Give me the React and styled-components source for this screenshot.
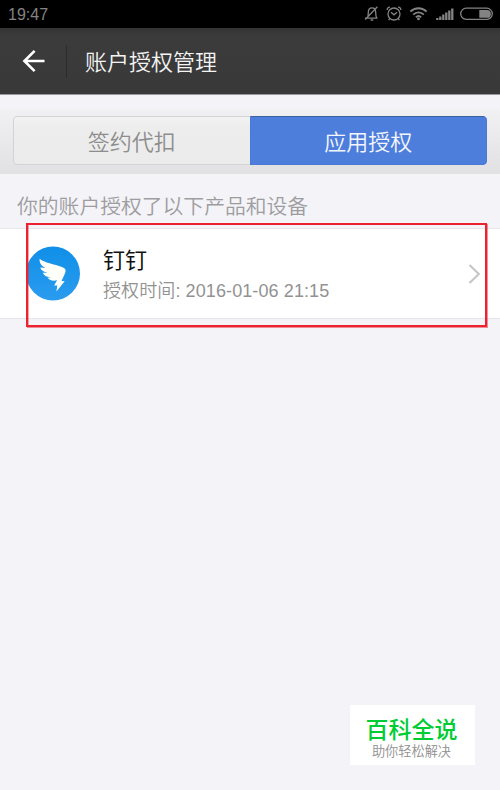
import React, { useState } from 'react';
import styled, { createGlobalStyle } from 'styled-components';

const GlobalStyle = createGlobalStyle`
  * {
    box-sizing: border-box;
  }

  body {
    margin: 0;
    background-color: #f4f3f8;
    font-family: 'Liberation Sans', 'Noto Sans CJK SC', sans-serif;
  }
`;

const Page = styled.div`
  position: relative;
  width: 500px;
  height: 790px;
  overflow: hidden;
  background-color: #f4f3f8;
`;

const StatusBar = styled.div`
  display: flex;
  align-items: center;
  justify-content: space-between;
  height: 28px;
  padding: 0 7px 0 8px;
  background-color: #000;
  color: #838383;
`;

const Clock = styled.span`
  padding-top: 1px;
  font-size: 16px;
  line-height: 28px;
`;

const StatusIcons = styled.svg`
  display: block;
  width: 130px;
  height: 28px;
`;

const Header = styled.header`
  display: flex;
  align-items: center;
  height: 67px;
  padding-left: 22px;
  background: linear-gradient(#343434, #3b3b3b 8px, #393939);
  border-bottom: 1px solid #9a9a9c;
`;

const BackButton = styled.button`
  display: flex;
  padding: 0;
  border: none;
  background: none;
  cursor: pointer;
`;

const Divider = styled.span`
  width: 1px;
  height: 33px;
  margin: 0 18px 0 21px;
  background-color: #2c2c2c;
`;

const Title = styled.h1`
  margin: 0;
  padding-top: 3px;
  color: #f4f4f4;
  font-size: 22px;
  font-weight: 350;
  line-height: 32px;
`;

const TabBar = styled.div`
  height: 65px;
  margin-top: 14px;
  padding: 7px 13px 0;
  background: linear-gradient(#f1f1f4, #e1e1e3);
`;

const Tabs = styled.div`
  display: flex;
  height: 49px;
  border-radius: 4px;
  overflow: hidden;
`;

const Tab = styled.button`
  flex: 1;
  padding: 0 0 1px;
  border: 1px solid ${({ $active }) => ($active ? '#4979d2' : '#d3d3d6')};
  border-top-color: ${({ $active }) => ($active ? '#3d629f' : '#d3d3d6')};
  border-radius: ${({ $active }) => ($active ? '0 4px 4px 0' : '4px 0 0 4px')};
  border-right-width: ${({ $active }) => ($active ? '1px' : '0')};
  background: ${({ $active }) => ($active ? '#4d7edc' : 'linear-gradient(#f3f3f3, #ededed 10px, #ebebeb)')};
  color: ${({ $active }) => ($active ? '#f4f6fc' : '#8d8d8d')};
  font-family: inherit;
  font-size: 22px;
  font-weight: 350;
  cursor: pointer;
`;

const Hint = styled.p`
  height: 54px;
  margin: 0;
  padding: 18px 0 0 17px;
  color: #9d9d9f;
  font-size: 20.8px;
  font-weight: 350;
  line-height: 30px;
  white-space: nowrap;
`;

const AppRow = styled.div`
  display: flex;
  align-items: center;
  height: 91px;
  padding: 0 19px 0 26px;
  background-color: #fff;
  border-top: 1px solid #e8e8ec;
  border-bottom: 1px solid #e6e6ea;
`;

const AppInfo = styled.div`
  flex: 1;
  margin-left: 23px;
  padding-top: 3px;
  white-space: nowrap;
`;

const AppName = styled.div`
  color: #111;
  font-size: 22px;
  line-height: 32px;
`;

const AuthTime = styled.div`
  color: #929292;
  font-size: 18px;
  font-weight: 350;
  letter-spacing: 0.1px;
  line-height: 28px;
`;

const Highlight = styled.div`
  position: absolute;
  top: 223px;
  left: 26px;
  width: 461px;
  height: 104px;
  border: 2px solid #eb2230;
  box-shadow: 1px 1px 0 rgba(235, 34, 48, 0.5), inset 1px 0 0 rgba(235, 34, 48, 0.4);
  pointer-events: none;
`;

const Watermark = styled.div`
  position: absolute;
  top: 705px;
  left: 350px;
  display: flex;
  flex-direction: column;
  align-items: center;
  width: 125px;
  height: 60px;
  padding: 10px 2px 0 0;
  background-color: #fff;
`;

const WatermarkName = styled.div`
  color: #0c3;
  font-size: 23px;
  font-weight: 500;
  line-height: 30px;
`;

const WatermarkSlogan = styled.div`
  color: #8f8f8f;
  font-size: 13.2px;
  font-weight: 350;
  line-height: 14px;
`;

const StatusIconGroup = () => (
  <StatusIcons viewBox="363 0 130 28" fill="none" stroke="currentColor" strokeWidth="1.3">
    {/* muted bell */}
    <path d="M365 18.2h12.5M367.2 18c1-1.3 1.1-3 1.1-5.5 0-3 1.6-4.7 3.7-4.7s3.7 1.7 3.7 4.7c0 2.5.1 4.2 1.1 5.5M370.6 20h2.6M365.2 19.5l12.2-12.8" />
    {/* alarm */}
    <circle cx="394" cy="14" r="6" />
    <path d="M391 12.2l3 2.6 3-2.6M387.2 10c0-1.6 1-2.7 2.7-2.8M400.8 10c0-1.6-1-2.7-2.7-2.8M389.8 18.5l-1.2 1.5M398.2 18.5l1.2 1.5" />
    {/* wifi */}
    <path strokeWidth="1.9" d="M410.4 11.6c4.6-4.5 11.6-4.5 16.2 0M413.2 14.6c3.1-3 7.5-3 10.6 0M415.9 17.2c1.6-1.5 3.6-1.5 5.2 0" />
    <circle cx="418.5" cy="18.9" r="1.4" fill="currentColor" stroke="none" />
    {/* signal */}
    <path strokeWidth="2.3" d="M437.3 20v-2M440.3 20v-3.5M443.3 20v-5.5M446.3 20v-7.5M449.3 20v-9.5M452.3 20v-11.5" />
    {/* battery */}
    <rect x="460.7" y="8.2" width="31.6" height="11.2" rx="5.6" />
    <path d="M479.3 10h7.7a3.8 3.8 0 0 1 0 7.8h-7.7z" fill="currentColor" stroke="none" />
  </StatusIcons>
);

const BackArrow = () => (
  <svg width="23" height="24" viewBox="0 0 23 24" fill="none" stroke="#fff" strokeWidth="2.6">
    <path d="M2.5 12H22.5M12.6 1.8L2.4 12l10.2 10.2" />
  </svg>
);

const DingLogo = () => (
  <svg width="54" height="55" viewBox="0 0 54 55">
    <defs>
      <linearGradient id="ding" x1="0" y1="0" x2="0" y2="1">
        <stop offset="0" stopColor="#0f8fe8" />
        <stop offset="1" stopColor="#2b9cef" />
      </linearGradient>
    </defs>
    <circle cx="27" cy="27.5" r="27" fill="url(#ding)" />
    <path
      d="M13.6 12.8C18.5 16.8 28 18.3 36 20.9c3 1 4.2 2.7 3.4 5.2-.6 2.3-2 5-3.9 9l3.2.1-8.3 10.2.9-5.8h-3.2l3-5.3c-4 .9-7.4.3-9.6-2.6l3.6-.7c-3.8.5-7-1.1-8.3-4.2l5-.1c-4.4-.8-6.8-2.4-7.5-5.2l5 .4c-3.9-2-6-4.7-5.7-9.1z"
      fill="#fffffa"
    />
  </svg>
);

const Chevron = () => (
  <svg width="13" height="22" viewBox="0 0 13 22" fill="none" stroke="#c6c6c8" strokeWidth="2.2">
    <path d="M1.5 2L10.8 11 1.5 20" />
  </svg>
);

const tabs = ['签约代扣', '应用授权'];

const App = () => {
  const [activeTab, setActiveTab] = useState(1);

  return (
    <>
      <GlobalStyle />
      <Page>
        <StatusBar>
          <Clock>19:47</Clock>
          <StatusIconGroup />
        </StatusBar>

        <Header>
          <BackButton aria-label="返回"><BackArrow /></BackButton>
          <Divider />
          <Title>账户授权管理</Title>
        </Header>

        <TabBar>
          <Tabs>
            {tabs.map((label, index) => (
              <Tab key={label} $active={index === activeTab} onClick={() => setActiveTab(index)}>
                {label}
              </Tab>
            ))}
          </Tabs>
        </TabBar>

        <Hint>你的账户授权了以下产品和设备</Hint>

        <AppRow>
          <DingLogo />
          <AppInfo>
            <AppName>钉钉</AppName>
            <AuthTime>授权时间: 2016-01-06 21:15</AuthTime>
          </AppInfo>
          <Chevron />
        </AppRow>

        <Highlight />

        <Watermark>
          <WatermarkName>百科全说</WatermarkName>
          <WatermarkSlogan>助你轻松解决</WatermarkSlogan>
        </Watermark>
      </Page>
    </>
  );
};

export default App;
